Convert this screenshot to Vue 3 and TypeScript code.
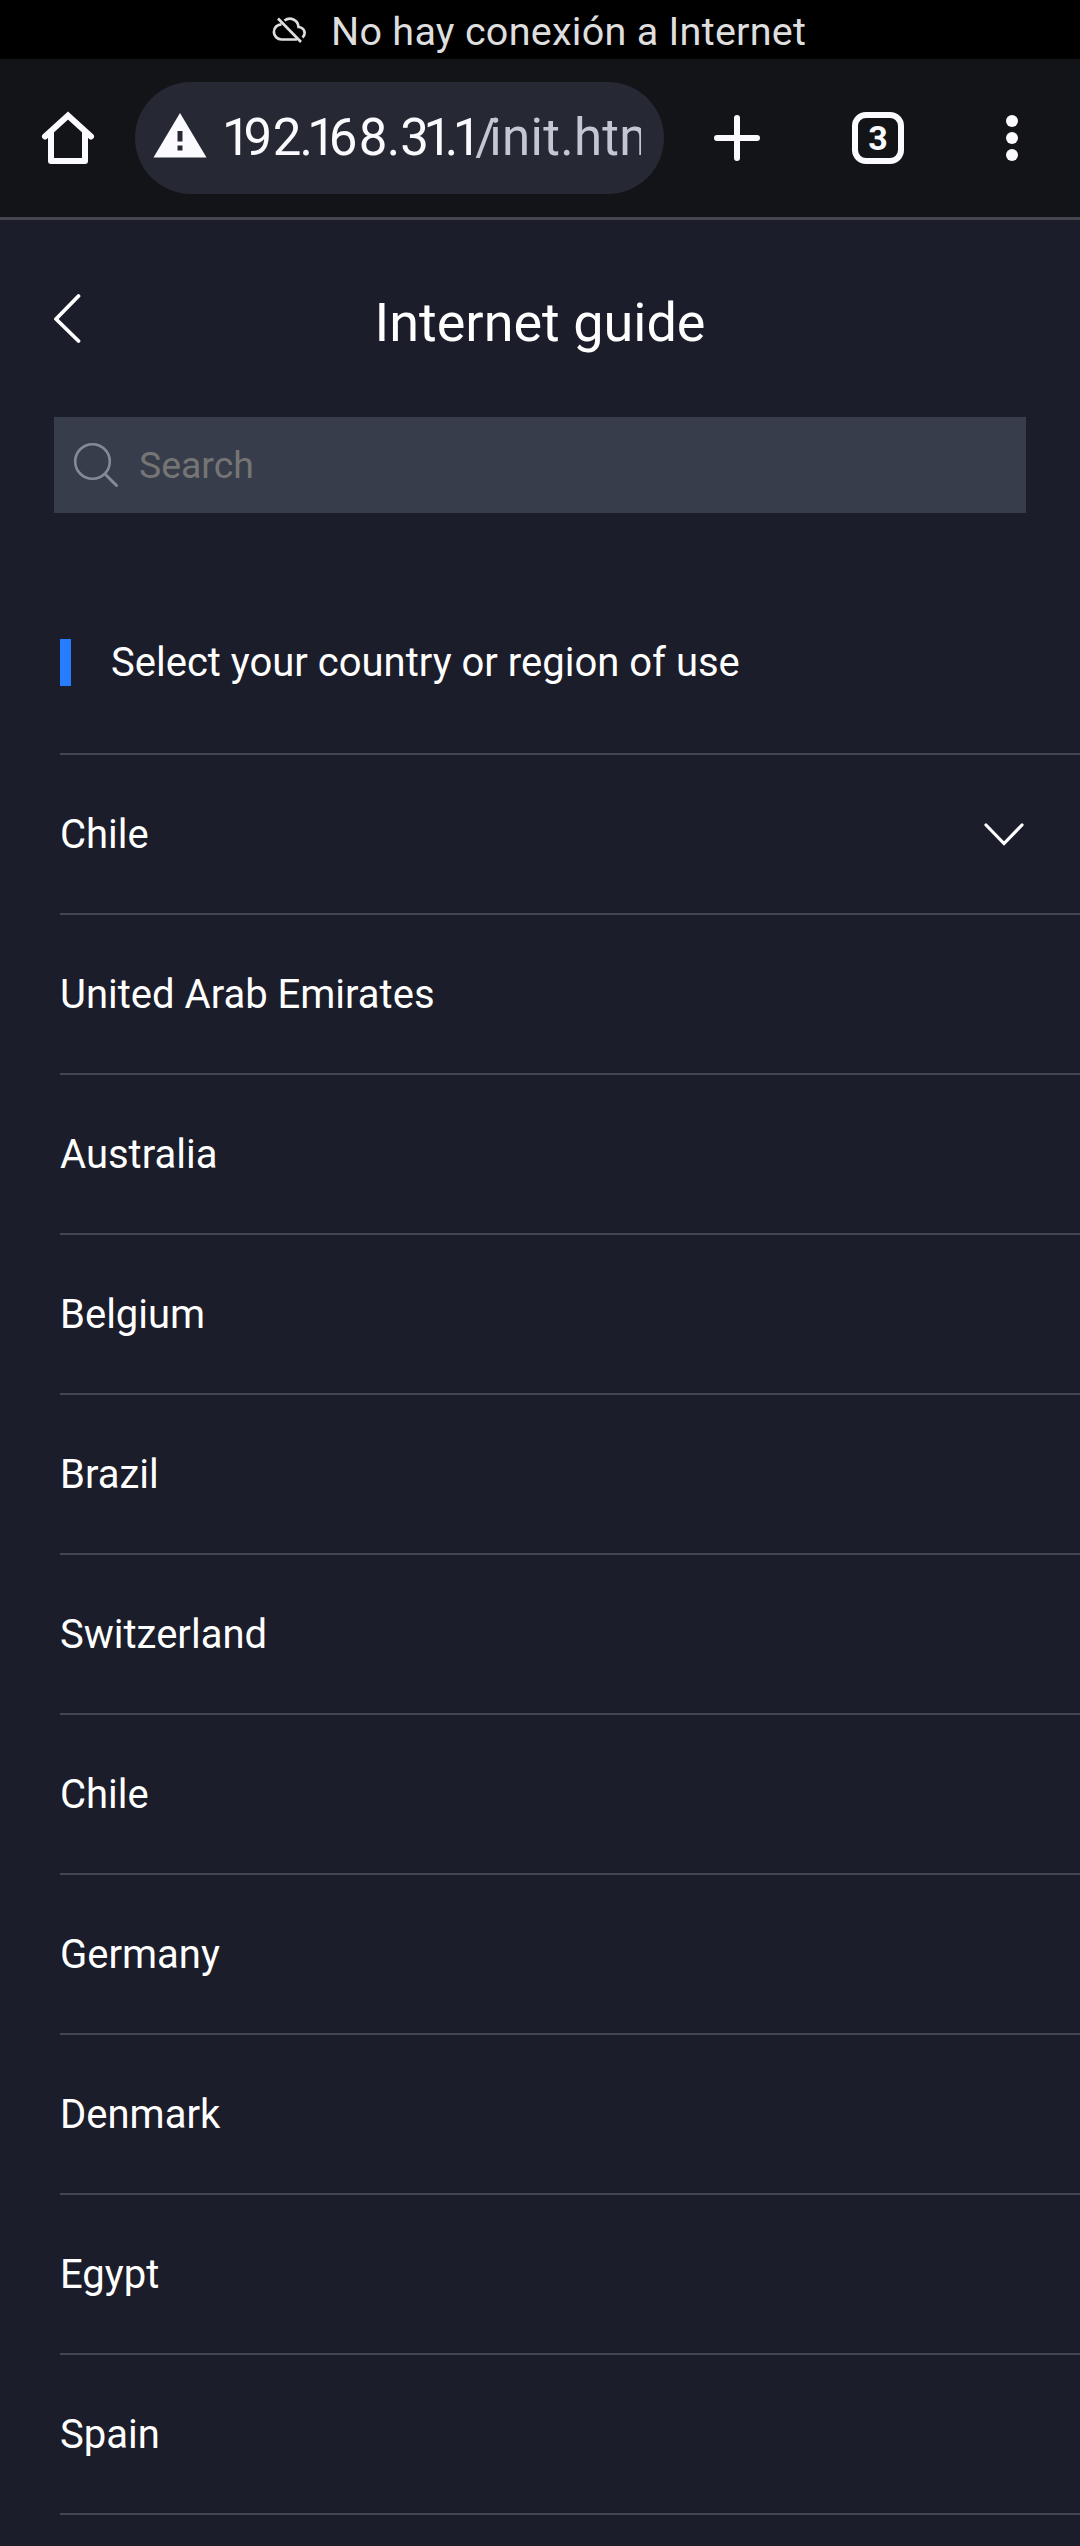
<script setup lang="ts">
interface Run {
  text: string
  spacing: number
}

const host: Run[] = [
  { text: '1', spacing: -7.3 },
  { text: '9', spacing: 0.7 },
  { text: '2', spacing: -2 },
  { text: '.', spacing: -5.6 },
  { text: '1', spacing: -7.1 },
  { text: '6', spacing: 1.1 },
  { text: '8', spacing: -0.6 },
  { text: '.', spacing: 0 },
  { text: '3', spacing: -5.3 },
  { text: '1', spacing: -7.4 },
  { text: '.', spacing: -5.6 },
  { text: '1', spacing: -6.1 },
]

const path: Run[] = [
  { text: '/', spacing: -7 },
  { text: 'init.html', spacing: 0.3 },
]

const countries: string[] = [
  'United Arab Emirates',
  'Australia',
  'Belgium',
  'Brazil',
  'Switzerland',
  'Chile',
  'Germany',
  'Denmark',
  'Egypt',
  'Spain',
]
</script>

<template>
  <div class="screen">
    <div class="status">
      <svg class="cloud" width="36" height="32" viewBox="0 0 36 32" fill="none" stroke="#dedede" stroke-width="2.7">
        <path d="M10.500 10.300A7.600 7.600 0 0 0 10.500 25.500H26" />
        <path d="M13.500 6.500C19 2.500 27 5.500 27.500 13C33.500 13.500 35.500 19.500 31.500 23.500" />
        <path d="M7 4.500L30 28" />
      </svg>
      <span>No hay conexión a Internet</span>
    </div>

    <header class="toolbar">
      <svg class="home" width="54" height="54" viewBox="0 0 54 54" fill="none" stroke="#fbfbff" stroke-width="6" stroke-linecap="round" stroke-linejoin="round">
        <path d="M4 25.500L27 4.500L50 25.500" stroke-linejoin="miter" />
        <path d="M10 22V50H44V22" />
      </svg>
      <div class="address">
        <svg width="54" height="46" viewBox="0 0 54 46">
          <path d="M27 1L53.500 45.500H.5Z" fill="#fbfbff" />
          <path d="M24.500 19h5v10.500h-5zM24.500 33.500h5v5h-5z" fill="#262833" />
        </svg>
        <div class="url"><span v-for="(run, i) in host" :key="i" :style="{ letterSpacing: run.spacing + 'px' }">{{ run.text }}</span><span v-for="run in path" :key="run.text" class="path" :style="{ letterSpacing: run.spacing + 'px' }">{{ run.text }}</span></div>
      </div>
      <svg class="plus" width="48" height="48" viewBox="0 0 48 48" stroke="#fbfbff" stroke-width="6" stroke-linecap="round">
        <path d="M4 24H44M24 4V44" />
      </svg>
      <div class="tabs">3</div>
      <svg class="dots" width="12" height="48" viewBox="0 0 12 48" fill="#fbfbff">
        <circle cx="6" cy="7" r="6" />
        <circle cx="6" cy="24" r="6" />
        <circle cx="6" cy="41" r="6" />
      </svg>
    </header>

    <main>
      <div class="title-bar">
        <svg class="back" width="30" height="52" viewBox="0 0 30 52" fill="none" stroke="#fff" stroke-width="3.8" stroke-linecap="round" stroke-linejoin="round">
          <path d="M24.500 3L2 26L24.500 48" />
        </svg>
        <h1>Internet guide</h1>
      </div>

      <div class="search">
        <svg width="46" height="46" viewBox="0 0 46 46" fill="none" stroke="#858a97" stroke-width="2.6" stroke-linecap="round">
          <circle cx="19.500" cy="19.500" r="17.300" />
          <path d="M32 32L43.500 43.500" stroke-width="3" />
        </svg>
        <span>Search</span>
      </div>

      <h2>Select your country or region of use</h2>

      <div class="row selected">
        <span>Chile</span>
        <svg width="42" height="24" viewBox="0 0 42 24" fill="none" stroke="#fff" stroke-width="3.2" stroke-linecap="round">
          <path d="M3 3L21 21.500L39 3" />
        </svg>
      </div>
      <div v-for="name in countries" :key="name" class="row">{{ name }}</div>
      <div class="row"></div>
    </main>
  </div>
</template>

<style>
body {
  margin: 0;
  background: #1b1d2a;
}
</style>

<style scoped>
.screen {
  width: 1080px;
  height: 2546px;
  overflow: hidden;
  background: #1b1d2a;
  color: #fff;
  font-family: Roboto, "Liberation Sans", sans-serif;
}
.status {
  display: flex;
  align-items: center;
  height: 59px;
  padding-left: 271px;
  background: #000;
  color: #dedede;
  font-size: 39.5px;
  letter-spacing: 0.28px;
  white-space: nowrap;
}
.status span {
  padding-top: 3px;
}
.cloud {
  width: 36px;
  margin-right: 24px;
}
.toolbar {
  box-sizing: border-box;
  display: flex;
  align-items: center;
  height: 161px;
  padding: 0 62px 0 41px;
  background: #131418;
  border-bottom: 3px solid #464752;
}
.home {
  flex: none;
  margin-right: 40px;
}
.address {
  box-sizing: border-box;
  flex: none;
  display: flex;
  align-items: center;
  width: 529px;
  height: 112px;
  padding-left: 18px;
  border-radius: 56px;
  background: #262833;
}
.address svg {
  flex: none;
  margin-top: -6px;
}
.url {
  width: 419px;
  margin-left: 15px;
  overflow: hidden;
  white-space: nowrap;
  color: #fbfbff;
  font-size: 51px;
  line-height: 112px;
}
.path {
  color: #c5c6d3;
}
.plus {
  flex: none;
  margin-left: 49px;
}
.tabs {
  box-sizing: border-box;
  flex: none;
  width: 52px;
  height: 52px;
  margin-left: 91px;
  border: 6px solid #fbfbff;
  border-radius: 14px;
  text-align: center;
  font-size: 34px;
  font-weight: 700;
  line-height: 40px;
  color: #fbfbff;
}
.dots {
  flex: none;
  margin-left: 102px;
}
.title-bar {
  display: flex;
  align-items: center;
  height: 197px;
  padding: 0 54px;
}
.back {
  flex: none;
  margin-right: -30px;
}
h1 {
  flex: 1;
  margin: 9px 0 0;
  text-align: center;
  font-size: 54px;
  font-weight: 400;
  line-height: 64px;
}
.search {
  display: flex;
  align-items: center;
  height: 96px;
  margin: 0 54px;
  background: #373d4a;
  color: #757575;
  font-size: 37.4px;
}
.search svg {
  margin: 0 20px 0 19px;
}
h2 {
  display: flex;
  align-items: center;
  height: 47px;
  margin: 126px 0 67px 60px;
  font-size: 40px;
  font-weight: 400;
}
h2::before {
  content: "";
  width: 11px;
  height: 47px;
  margin-right: 40px;
  background: #277dff;
}
.row {
  box-sizing: border-box;
  display: flex;
  align-items: center;
  height: 160px;
  margin-left: 60px;
  border-top: 2px solid #444653;
  font-size: 40px;
}
.selected {
  justify-content: space-between;
  padding-right: 55px;
}
</style>
